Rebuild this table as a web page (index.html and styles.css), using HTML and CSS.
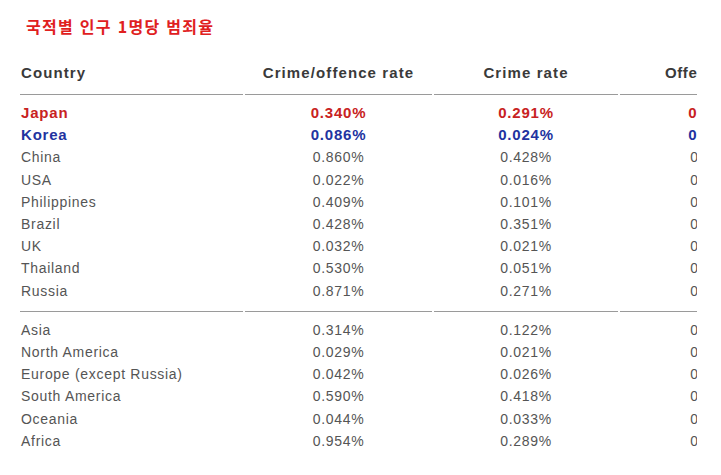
FILE: index.html
```html
<!DOCTYPE html>
<html lang="ko">
<head>
<meta charset="utf-8">
<title>국적별 인구 1명당 범죄율</title>
<link rel="stylesheet" href="styles.css">
</head>
<body>
<h1 class="title">국적별 인구 1명당 범죄율</h1>
<div class="clip">
  <table class="rates">
    <colgroup>
      <col class="c1"><col class="c2"><col class="c3"><col class="c4">
    </colgroup>
    <thead>
      <tr><th class="name">Country</th><th>Crime/offence rate</th><th>Crime rate</th><th class="last-col">Offender rate</th></tr>
    </thead>
    <tbody>
      <tr class="hl red first"><td class="name">Japan</td><td>0.340%</td><td>0.291%</td><td>0.000%</td></tr>
      <tr class="hl blue"><td class="name">Korea</td><td>0.086%</td><td>0.024%</td><td>0.000%</td></tr>
      <tr><td class="name">China</td><td>0.860%</td><td>0.428%</td><td>0.000%</td></tr>
      <tr><td class="name">USA</td><td>0.022%</td><td>0.016%</td><td>0.000%</td></tr>
      <tr><td class="name">Philippines</td><td>0.409%</td><td>0.101%</td><td>0.000%</td></tr>
      <tr><td class="name">Brazil</td><td>0.428%</td><td>0.351%</td><td>0.000%</td></tr>
      <tr><td class="name">UK</td><td>0.032%</td><td>0.021%</td><td>0.000%</td></tr>
      <tr><td class="name">Thailand</td><td>0.530%</td><td>0.051%</td><td>0.000%</td></tr>
      <tr class="last"><td class="name">Russia</td><td>0.871%</td><td>0.271%</td><td>0.000%</td></tr>
      <tr class="first"><td class="name">Asia</td><td>0.314%</td><td>0.122%</td><td>0.000%</td></tr>
      <tr><td class="name">North America</td><td>0.029%</td><td>0.021%</td><td>0.000%</td></tr>
      <tr><td class="name">Europe (except Russia)</td><td>0.042%</td><td>0.026%</td><td>0.000%</td></tr>
      <tr><td class="name">South America</td><td>0.590%</td><td>0.418%</td><td>0.000%</td></tr>
      <tr><td class="name">Oceania</td><td>0.044%</td><td>0.033%</td><td>0.000%</td></tr>
      <tr><td class="name">Africa</td><td>0.954%</td><td>0.289%</td><td>0.000%</td></tr>
    </tbody>
  </table>
</div>
</body>
</html>
```

FILE: styles.css
```css
html, body {
  margin: 0;
  padding: 0;
  background: #ffffff;
}

body {
  font-family: "Liberation Sans", Arial, sans-serif;
  color: #555555;
}

.title {
  margin: 15px 0 0 26px;
  font-family: "Noto Sans CJK KR", "Noto Sans", sans-serif;
  font-size: 16px;
  font-weight: 700;
  line-height: 22px;
  letter-spacing: 1.3px;
  color: #e0201e;
}

.clip {
  width: 679px;
  margin: 26px 0 0 18px;
  overflow: hidden;
}

.rates {
  table-layout: fixed;
  width: 796px;
  border-collapse: separate;
  border-spacing: 2px 0;
}

.c1 { width: 223px; }
.c2 { width: 187px; }
.c3 { width: 184px; }
.c4 { width: 192px; }

.rates th,
.rates td {
  padding: 0;
  text-align: center;
  white-space: nowrap;
  overflow: hidden;
}

.rates th {
  font-size: 15px;
  font-weight: 700;
  line-height: 20px;
  letter-spacing: 1.1px;
  color: #3a3a3a;
  padding-bottom: 11px;
  border-bottom: 1px solid #9a9a9a;
}

.rates th.last-col {
  letter-spacing: 0.6px;
}

.rates td {
  font-size: 14px;
  line-height: 22.2px;
  letter-spacing: 0.7px;
}

.rates .name {
  text-align: left;
  padding-left: 1px;
}

.rates .hl td {
  font-size: 15px;
  font-weight: 700;
  letter-spacing: 0.8px;
}

.rates .red td { color: #c82222; }
.rates .blue td { color: #2233a0; }

.rates .first td { padding-top: 7px; }

.rates .last td {
  padding-bottom: 9px;
  border-bottom: 1px solid #9a9a9a;
}
```
